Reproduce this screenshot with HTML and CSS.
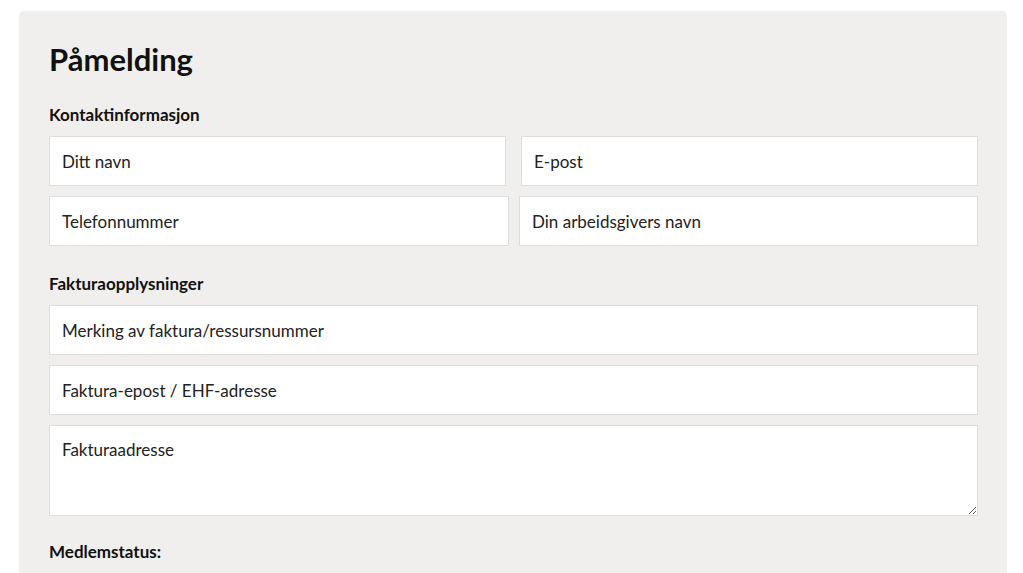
FILE: index.html
```html
<!DOCTYPE html>
<html lang="no">
<head>
    <meta charset="UTF-8">
    <meta name="viewport" content="width=device-width, initial-scale=1.0">
    <title>Påmelding</title>
    <link rel="stylesheet" href="styles.css">
</head>
<body>
    <main class="signup">
        <h1>Påmelding</h1>

        <form class="signup-form">
            <h3>Kontaktinformasjon</h3>
            <div class="row row-first">
                <input type="text" placeholder="Ditt navn">
                <input type="email" placeholder="E-post">
            </div>
            <div class="row row-second">
                <input type="tel" placeholder="Telefonnummer">
                <input type="text" placeholder="Din arbeidsgivers navn">
            </div>

            <h3>Fakturaopplysninger</h3>
            <input type="text" placeholder="Merking av faktura/ressursnummer">
            <input type="text" placeholder="Faktura-epost / EHF-adresse">
            <textarea placeholder="Fakturaadresse"></textarea>

            <h3 class="member-title">Medlemstatus:</h3>
        </form>
    </main>
</body>
</html>
```

FILE: styles.css
```css
/* General Styles */
body {
    margin: 0;
    padding: 11px 16px 0 19px;
    background-color: #ffffff;
    color: #111111;
    font-family: 'Lato', 'Noto Sans', sans-serif;
}

.signup {
    width: 929px;
    padding: 28px 29px 40px 30px;
    background-color: #f0efed;
    border-radius: 5px 5px 0 0;
}

h1 {
    margin: 0 0 25px;
    font-size: 31px;
    line-height: 40px;
    font-weight: 700;
}

h3 {
    margin: 0 0 11px;
    font-size: 17px;
    line-height: 21px;
    font-weight: 700;
}

.signup-form {
    display: flex;
    flex-direction: column;
}

/* Form fields */
input, textarea {
    box-sizing: border-box;
    width: 100%;
    height: 50px;
    margin: 0 0 10px;
    padding: 0 12px;
    border: 1px solid #dddddd;
    border-radius: 0;
    background-color: #ffffff;
    font-family: inherit;
    font-size: 17px;
    color: #222222;
}

input::placeholder, textarea::placeholder {
    color: #222222;
    opacity: 1;
}

textarea {
    height: 91px;
    padding-top: 13px;
    resize: vertical;
}

.row {
    display: grid;
}

.row input {
    margin-bottom: 0;
}

.row-first {
    grid-template-columns: 457px 457px;
    column-gap: 15px;
    margin-bottom: 10px;
}

.row-second {
    grid-template-columns: 460px 459px;
    column-gap: 10px;
    margin-bottom: 27px;
}

.member-title {
    margin-top: 15px;
}
```
